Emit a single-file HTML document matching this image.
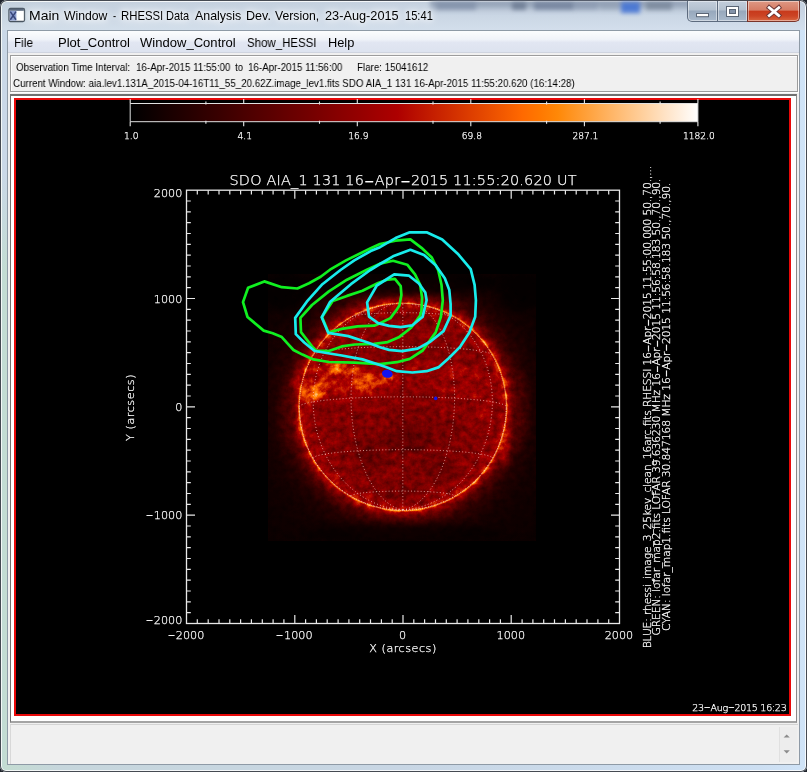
<!DOCTYPE html><html><head><meta charset="utf-8"><title>Main Window - RHESSI Data Analysis</title><style>

html,body{margin:0;padding:0;}
body{width:807px;height:772px;overflow:hidden;background:#20242c;font-family:"Liberation Sans",sans-serif;position:relative;}
body>div,body>svg{position:absolute;}
#win{left:0;top:0;width:807px;height:772px;border-radius:7px 7px 6px 6px;
 background:linear-gradient(90deg,#c1dcd6 0,#c4dcd2 6px,#c6d6dc 60px,#c8d6e4 400px,#cddff2 760px,#d0e4f8 807px);
 box-shadow:inset 0 0 0 1px #454a52, inset 0 0 0 2px rgba(255,255,255,.8);}
#tb{left:2px;top:2px;width:803px;height:28px;border-radius:5px 5px 0 0;background:linear-gradient(180deg,rgba(196,208,222,.95) 0,rgba(200,212,226,.9) 10px,rgba(212,223,236,.9) 28px);}
#tbsh{left:430px;top:1px;width:262px;height:11px;background:linear-gradient(180deg,rgba(110,125,150,.75),rgba(140,155,178,.5) 60%,rgba(180,192,210,0));filter:blur(2px);}
  .tbp{top:2px;height:8px;filter:blur(2px);}
#tbbl{left:621px;top:2px;width:19px;height:11px;background:#3f70d6;filter:blur(2.2px);opacity:.85;}
#lf{left:2px;top:30px;width:6px;height:240px;background:linear-gradient(180deg,#cad8e7 0,#cad8e7 60%,rgba(202,216,231,0) 100%);}
#client{left:8px;top:31px;width:791px;height:733px;background:#f0f0f0;box-shadow:0 0 0 1px #8e9aa6;}
#ttl,#menubar span,#info div{will-change:transform;}
#ttl span{position:absolute;top:0;transform-origin:0 50%;}
#ttl{left:0px;top:5.5px;width:440px;height:20px;font-size:12.63px;line-height:20px;color:#000;white-space:nowrap;text-shadow:0 0 5px #fff,0 0 9px #fff,0 0 12px #fff;}
.cbn{top:1px;height:21px;border:1px solid #5d6b7e;border-top:none;box-sizing:border-box;box-shadow:inset 0 0 0 1px rgba(255,255,255,.45);}
#bmin{left:687px;width:31px;border-radius:0 0 0 5px;background:linear-gradient(180deg,#c3cedb 0,#b3c0cf 45%,#97a8bc 50%,#a9b9cb 100%);}
#bmax{left:717px;width:31px;background:linear-gradient(180deg,#c3cedb 0,#b3c0cf 45%,#97a8bc 50%,#a9b9cb 100%);}
#bcls{left:747px;width:53px;border-radius:0 0 5px 0;border-color:#7a342a;background:linear-gradient(180deg,#de9884 0,#d67c64 45%,#c83a1c 52%,#cc4424 75%,#d86640 100%);}
#menubar{left:8px;top:31px;width:791px;height:21px;background:linear-gradient(180deg,#fcfdfe 0,#f0f3f9 40%,#e1e6f2 55%,#dde3ef 100%);border-bottom:1px solid #cfd4df;}
#menubar span{position:absolute;top:1.8px;font-size:12.8px;line-height:20px;color:#000;white-space:nowrap;transform-origin:0 50%;}
#info{left:10px;top:55px;width:786px;height:35px;border:1px solid #9c9c9c;background:#f0f0f0;box-shadow:inset 1px 1px 0 #fff, 1px 1px 0 #fff;}
#info div{position:absolute;font-size:11px;line-height:14px;white-space:pre;color:#000;transform:scaleX(.889);transform-origin:0 50%;}
#pp{left:10px;top:94.3px;width:784.7px;height:624.5px;background:#fff;border:1px solid #8a8a8a;border-top:2px solid #707070;border-left-color:#707070;border-bottom:2px solid #a4a4a4;}
#red{position:absolute;left:3px;top:1.6px;width:772.7px;height:614.4px;border:2.3px solid #e80808;background:#000;}
#stat{left:10px;top:724px;width:787px;height:39px;background:#f0f0f0;border-top:1px solid #d4d4d4;border-left:1px solid #d8d8d8;}
#sb{position:absolute;left:768px;top:2px;width:17px;height:35px;background:#ededed;border-left:1px solid #e0e0e0;}
.ht{font-family:"DejaVu Sans","Liberation Sans",sans-serif;font-weight:200;fill:#fff;stroke:#fff;stroke-width:0.25px;}
#plot{left:0;top:0;will-change:transform;}

</style></head><body>
<div id="win"></div><div id="tb"></div><div id="lf"></div><div id="tbsh"></div>
<div class="tbp" style="left:436px;width:40px;background:#74849f;opacity:0.55"></div>
<div class="tbp" style="left:512px;width:14px;background:#56657f;opacity:0.6"></div>
<div class="tbp" style="left:534px;width:40px;background:#62718f;opacity:0.6"></div>
<div class="tbp" style="left:574px;width:24px;background:#7f8ea8;opacity:0.45"></div>
<div class="tbp" style="left:646px;width:26px;background:#667488;opacity:0.55"></div>
<div class="tbp" style="left:600px;width:20px;background:#8a98ae;opacity:0.4"></div>
<div id="tbbl"></div>
<svg id="ico" style="left:8px;top:7px" width="18" height="16" viewBox="0 0 18 16"><rect x="1" y="1.5" width="15.5" height="13" rx="1.5" fill="#fff" stroke="#46525e" stroke-width="1.3"/><rect x="1.6" y="1.6" width="14.3" height="2.2" fill="#59677a"/><rect x="1.8" y="3.8" width="6.6" height="9.8" fill="#8d9fd0"/><path d="M2.3 4.6 L8 12.8 M8 4.6 L2.3 12.8" stroke="#39477c" stroke-width="1.5"/></svg>
<div id="ttl"><span style="left:29.3px;transform:scaleX(1.106)">Main</span> <span style="left:64.4px;transform:scaleX(0.965)">Window</span> <span style="left:113.2px;transform:scaleX(0.75)">-</span> <span style="left:121.3px;transform:scaleX(0.899)">RHESSI</span> <span style="left:166.3px;transform:scaleX(0.871)">Data</span> <span style="left:194.5px;transform:scaleX(0.983)">Analysis</span> <span style="left:245.9px;transform:scaleX(0.995)">Dev.</span> <span style="left:275.0px;transform:scaleX(0.967)">Version,</span> <span style="left:324.9px;transform:scaleX(1.009)">23-Aug-2015</span> <span style="left:404.5px;transform:scaleX(0.881)">15:41</span></div>
<div class="cbn" id="bmin"><svg width="29" height="20"><rect x="8.5" y="12.5" width="12" height="3.2" fill="#fff" stroke="#5b6676" stroke-width="1"/></svg></div>
<div class="cbn" id="bmax"><svg width="29" height="20"><rect x="8.5" y="5.5" width="12" height="10" fill="#fff" stroke="#5b6676" stroke-width="1"/><rect x="11.5" y="8.5" width="6" height="4" fill="#8393aa" stroke="#5b6676" stroke-width="1"/></svg></div>
<div class="cbn" id="bcls"><svg width="51" height="20"><path d="M21.2 6.6 L30.8 14.6 M30.8 6.6 L21.2 14.6" stroke="#6a3434" stroke-width="4.6" stroke-linecap="square"/><path d="M21.2 6.6 L30.8 14.6 M30.8 6.6 L21.2 14.6" stroke="#fff" stroke-width="2.8" stroke-linecap="square"/></svg></div>
<div id="client"></div>
<div id="menubar"><span style="left:5.5px;transform:scaleX(.92)">File</span><span style="left:49.5px;transform:scaleX(1.02)">Plot_Control</span><span style="left:132px;transform:scaleX(1.02)">Window_Control</span><span style="left:239px;transform:scaleX(.896)">Show_HESSI</span><span style="left:320px">Help</span></div>
<div id="info"><div style="left:4.5px;top:4px">Observation Time Interval: </div><div style="left:125px;top:4px">16-Apr-2015 11:55:00</div><div style="left:224px;top:4px">to</div><div style="left:236.5px;top:4px">16-Apr-2015 11:56:00</div><div style="left:346px;top:4px">Flare: 15041612</div><div style="left:1.5px;top:20px">Current Window: aia.lev1.131A_2015-04-16T11_55_20.62Z.image_lev1.fits SDO AIA_1 131 16-Apr-2015 11:55:20.620 (16:14:28)</div></div>
<div id="pp"><div id="red"></div></div>
<div id="stat"><div id="sb"><svg width="17" height="36"><path d="M3.6 10.6 L6.7 7.4 L9.8 10.6Z M3.6 23.2 L6.7 26.4 L9.8 23.2Z" fill="#8c8c8c"/></svg></div></div>
<svg id="plot" width="807" height="772" viewBox="0 0 807 772">
<defs>
<linearGradient id="cb" x1="0" x2="1" y1="0" y2="0">
<stop offset="0.0000" stop-color="rgb(0,0,0)"/>
<stop offset="0.0314" stop-color="rgb(11,0,0)"/>
<stop offset="0.0627" stop-color="rgb(23,0,0)"/>
<stop offset="0.0941" stop-color="rgb(34,0,0)"/>
<stop offset="0.1255" stop-color="rgb(46,0,0)"/>
<stop offset="0.1569" stop-color="rgb(57,0,0)"/>
<stop offset="0.1882" stop-color="rgb(69,0,0)"/>
<stop offset="0.2196" stop-color="rgb(81,0,0)"/>
<stop offset="0.2510" stop-color="rgb(92,0,0)"/>
<stop offset="0.2824" stop-color="rgb(104,0,0)"/>
<stop offset="0.3137" stop-color="rgb(115,0,0)"/>
<stop offset="0.3451" stop-color="rgb(127,0,0)"/>
<stop offset="0.3765" stop-color="rgb(139,0,0)"/>
<stop offset="0.4078" stop-color="rgb(150,0,0)"/>
<stop offset="0.4392" stop-color="rgb(162,0,0)"/>
<stop offset="0.4706" stop-color="rgb(173,0,0)"/>
<stop offset="0.5020" stop-color="rgb(185,15,0)"/>
<stop offset="0.5333" stop-color="rgb(197,30,0)"/>
<stop offset="0.5647" stop-color="rgb(208,45,0)"/>
<stop offset="0.5961" stop-color="rgb(220,60,0)"/>
<stop offset="0.6275" stop-color="rgb(231,75,0)"/>
<stop offset="0.6588" stop-color="rgb(243,90,0)"/>
<stop offset="0.6902" stop-color="rgb(255,105,0)"/>
<stop offset="0.7216" stop-color="rgb(255,120,0)"/>
<stop offset="0.7529" stop-color="rgb(255,136,7)"/>
<stop offset="0.7843" stop-color="rgb(255,151,39)"/>
<stop offset="0.8157" stop-color="rgb(255,166,70)"/>
<stop offset="0.8471" stop-color="rgb(255,181,102)"/>
<stop offset="0.8784" stop-color="rgb(255,196,133)"/>
<stop offset="0.9098" stop-color="rgb(255,211,164)"/>
<stop offset="0.9412" stop-color="rgb(255,226,196)"/>
<stop offset="0.9725" stop-color="rgb(255,241,227)"/>
<stop offset="1" stop-color="#fff"/></linearGradient>
<radialGradient id="gcor" gradientUnits="userSpaceOnUse" cx="402.8" cy="406.9" r="190">
<stop offset="0.5447" stop-color="rgb(140,140,140)"/>
<stop offset="0.5556" stop-color="rgb(118,118,118)"/>
<stop offset="0.5720" stop-color="rgb(88,88,88)"/>
<stop offset="0.5883" stop-color="rgb(64,64,64)"/>
<stop offset="0.6101" stop-color="rgb(46,46,46)"/>
<stop offset="0.6428" stop-color="rgb(30,30,30)"/>
<stop offset="0.6809" stop-color="rgb(21,21,21)"/>
<stop offset="0.7354" stop-color="rgb(14,14,14)"/>
<stop offset="0.8716" stop-color="rgb(9,9,9)"/>
<stop offset="1.0078" stop-color="rgb(7,7,7)"/>
</radialGradient>
<radialGradient id="gdisk" gradientUnits="userSpaceOnUse" cx="402.8" cy="406.9" r="103.5">
<stop offset="0.000" stop-color="rgb(82,82,82)"/>
<stop offset="0.600" stop-color="rgb(85,85,85)"/>
<stop offset="0.850" stop-color="rgb(91,91,91)"/>
<stop offset="0.950" stop-color="rgb(102,102,102)"/>
<stop offset="1.000" stop-color="rgb(126,126,126)"/>
</radialGradient>
<filter id="sunmap" filterUnits="userSpaceOnUse" x="268" y="274" width="268" height="267" color-interpolation-filters="sRGB">
<feTurbulence type="fractalNoise" baseFrequency="0.15" numOctaves="4" seed="11" result="n0"/>
<feColorMatrix in="n0" type="matrix" values="1 0 0 0 0  1 0 0 0 0  1 0 0 0 0  0 0 0 0 1" result="n"/>
<feComposite in="SourceGraphic" in2="n" operator="arithmetic" k1="0.9" k2="0.55" k3="0" k4="0" result="m"/>
<feComponentTransfer in="m"><feFuncR type="table" tableValues="0.000 0.028 0.057 0.085 0.114 0.142 0.170 0.199 0.227 0.256 0.284 0.312 0.341 0.369 0.398 0.426 0.455 0.483 0.511 0.540 0.568 0.597 0.625 0.653 0.682 0.710 0.739 0.767 0.795 0.824 0.852 0.881 0.909 0.938 0.966 0.994 1.000 1.000 1.000 1.000 1.000 1.000 1.000 1.000 1.000 1.000 1.000 1.000 1.000 1.000 1.000 1.000"/><feFuncG type="table" tableValues="0.000 0.000 0.000 0.000 0.000 0.000 0.000 0.000 0.000 0.000 0.000 0.000 0.000 0.000 0.000 0.000 0.000 0.000 0.000 0.000 0.000 0.000 0.000 0.000 0.000 0.037 0.074 0.111 0.148 0.185 0.222 0.259 0.296 0.333 0.370 0.407 0.444 0.481 0.519 0.556 0.593 0.630 0.667 0.704 0.741 0.778 0.815 0.852 0.889 0.926 0.963 1.000"/><feFuncB type="table" tableValues="0.000 0.000 0.000 0.000 0.000 0.000 0.000 0.000 0.000 0.000 0.000 0.000 0.000 0.000 0.000 0.000 0.000 0.000 0.000 0.000 0.000 0.000 0.000 0.000 0.000 0.000 0.000 0.000 0.000 0.000 0.000 0.000 0.000 0.000 0.000 0.000 0.000 0.000 0.000 0.077 0.154 0.231 0.308 0.385 0.462 0.538 0.615 0.692 0.769 0.846 0.923 1.000"/></feComponentTransfer>
</filter>
<filter id="bl3" x="-1" y="-1" width="3" height="3"><feGaussianBlur stdDeviation="3"/></filter>
<filter id="bl2" x="-1" y="-1" width="3" height="3"><feGaussianBlur stdDeviation="1.6"/></filter>
<filter id="bl1" x="-0.2" y="-0.2" width="1.4" height="1.4"><feGaussianBlur stdDeviation="0.6"/></filter>
<clipPath id="cd"><circle cx="402.8" cy="406.9" r="103.5"/></clipPath>
<clipPath id="ci"><rect x="268" y="274" width="268" height="267"/></clipPath>
</defs>
<g filter="url(#sunmap)">
<rect x="268" y="274" width="268" height="267" fill="url(#gcor)"/>
<circle cx="402.8" cy="406.9" r="103.5" fill="url(#gdisk)"/>
<g clip-path="url(#ci)">
<ellipse cx="345" cy="383" rx="54" ry="19" fill="rgb(124,124,124)" opacity="0.8" filter="url(#bl3)"/>
<ellipse cx="445" cy="378" rx="48" ry="15" fill="rgb(110,110,110)" opacity="0.65" filter="url(#bl3)"/>
<ellipse cx="400" cy="398" rx="92" ry="12" fill="rgb(96,96,96)" opacity="0.55" filter="url(#bl3)"/>
<ellipse cx="400" cy="350" rx="60" ry="25" fill="rgb(94,94,94)" opacity="0.45" filter="url(#bl3)"/>
<ellipse cx="468" cy="408" rx="30" ry="28" fill="rgb(102,102,102)" opacity="0.55" filter="url(#bl3)"/>
<ellipse cx="350" cy="420" rx="40" ry="22" fill="rgb(96,96,96)" opacity="0.4" filter="url(#bl3)"/>
<ellipse cx="337" cy="369" rx="10" ry="5" fill="rgb(190,190,190)" opacity="0.9" filter="url(#bl3)"/>
<ellipse cx="350" cy="372" rx="8" ry="4" fill="rgb(170,170,170)" opacity="0.7" filter="url(#bl3)"/>
<ellipse cx="315" cy="392" rx="11" ry="7" fill="rgb(180,180,180)" opacity="0.9" filter="url(#bl3)"/>
<ellipse cx="322" cy="386" rx="6" ry="5" fill="rgb(190,190,190)" opacity="0.8" filter="url(#bl3)"/>
<ellipse cx="308" cy="398" rx="5" ry="5" fill="rgb(175,175,175)" opacity="0.8" filter="url(#bl3)"/>
<ellipse cx="366" cy="382" rx="12" ry="8" fill="rgb(160,160,160)" opacity="0.8" filter="url(#bl3)"/>
<ellipse cx="362" cy="386" rx="6" ry="4" fill="rgb(185,185,185)" opacity="0.7" filter="url(#bl3)"/>
<ellipse cx="357" cy="377" rx="5" ry="4" fill="rgb(175,175,175)" opacity="0.7" filter="url(#bl3)"/>
<ellipse cx="372" cy="388" rx="5" ry="4" fill="rgb(170,170,170)" opacity="0.7" filter="url(#bl3)"/>
<ellipse cx="388" cy="378" rx="9" ry="4" fill="rgb(165,165,165)" opacity="0.75" filter="url(#bl3)"/>
<ellipse cx="350" cy="395" rx="8" ry="4" fill="rgb(150,150,150)" opacity="0.6" filter="url(#bl3)"/>
<ellipse cx="420" cy="368" rx="14" ry="4" fill="rgb(135,135,135)" opacity="0.5" filter="url(#bl3)"/>
<ellipse cx="455" cy="372" rx="10" ry="5" fill="rgb(140,140,140)" opacity="0.55" filter="url(#bl3)"/>
<ellipse cx="470" cy="392" rx="8" ry="6" fill="rgb(125,125,125)" opacity="0.5" filter="url(#bl3)"/>
<ellipse cx="484" cy="412" rx="6" ry="8" fill="rgb(125,125,125)" opacity="0.5" filter="url(#bl3)"/>
<ellipse cx="322" cy="446" rx="6" ry="8" fill="rgb(115,115,115)" opacity="0.4" filter="url(#bl3)"/>
<ellipse cx="300.5" cy="424" rx="2.5" ry="13" fill="rgb(185,185,185)" opacity="0.8" filter="url(#bl3)"/>
<ellipse cx="301" cy="392" rx="2.5" ry="8" fill="rgb(165,165,165)" opacity="0.6" filter="url(#bl3)"/>
<ellipse cx="506" cy="442" rx="2.5" ry="13" fill="rgb(185,185,185)" opacity="0.8" filter="url(#bl3)"/>
<ellipse cx="505" cy="460" rx="3" ry="5" fill="rgb(185,185,185)" opacity="0.6" filter="url(#bl3)"/>
<ellipse cx="506" cy="385" rx="2.5" ry="10" fill="rgb(170,170,170)" opacity="0.6" filter="url(#bl3)"/>
<ellipse cx="518" cy="410" rx="9" ry="40" fill="rgb(60,60,60)" opacity="0.5" filter="url(#bl3)"/>
<ellipse cx="288" cy="415" rx="8" ry="36" fill="rgb(52,52,52)" opacity="0.5" filter="url(#bl3)"/>
<ellipse cx="403" cy="282" rx="100" ry="13" fill="rgb(4,4,4)" opacity="0.65" filter="url(#bl3)"/>
<ellipse cx="403" cy="534" rx="100" ry="11" fill="rgb(4,4,4)" opacity="0.55" filter="url(#bl3)"/>
<ellipse cx="520" cy="292" rx="22" ry="20" fill="rgb(3,3,3)" opacity="0.6" filter="url(#bl3)"/>
<ellipse cx="286" cy="292" rx="22" ry="20" fill="rgb(3,3,3)" opacity="0.6" filter="url(#bl3)"/>
<ellipse cx="410" cy="440" rx="22" ry="14" fill="rgb(52,52,52)" opacity="0.5" filter="url(#bl3)"/>
<ellipse cx="440" cy="470" rx="16" ry="10" fill="rgb(52,52,52)" opacity="0.45" filter="url(#bl3)"/>
<ellipse cx="370" cy="455" rx="14" ry="18" fill="rgb(56,56,56)" opacity="0.4" filter="url(#bl3)"/>
<ellipse cx="400" cy="492" rx="25" ry="8" fill="rgb(56,56,56)" opacity="0.35" filter="url(#bl3)"/>
<ellipse cx="455" cy="425" rx="12" ry="8" fill="rgb(58,58,58)" opacity="0.35" filter="url(#bl3)"/>
<circle cx="402.8" cy="406.9" r="104.1" fill="none" stroke="#a8a8a8" stroke-width="1.3" filter="url(#bl1)"/>
</g>
</g>
<circle cx="402.8" cy="406.9" r="103.5" fill="none" stroke="#ffe2a0" stroke-width="0.9" stroke-dasharray="1.2 0.8" opacity="0.9"/>
<path d="M351.1 496.1 L351.1 495.8 L351.3 495.6 L351.7 495.3 L352.2 495.1 L352.8 494.8 L353.6 494.5 L354.5 494.3 L355.5 494.1 L356.7 493.8 L358 493.6 L359.4 493.4 L360.9 493.1 L362.6 492.9 L364.3 492.7 L366.2 492.5 L368.2 492.4 L370.2 492.2 L372.4 492 L374.6 491.9 L376.9 491.7 L379.3 491.6 L381.8 491.5 L384.3 491.4 L386.8 491.3 L389.4 491.2 L392 491.2 L394.7 491.1 L397.4 491.1 L400.1 491.1 L402.8 491.1 L405.5 491.1 L408.2 491.1 L410.9 491.1 L413.6 491.2 L416.2 491.2 L418.8 491.3 L421.3 491.4 L423.8 491.5 L426.3 491.6 L428.7 491.7 L431 491.9 L433.2 492 L435.4 492.2 L437.4 492.4 L439.4 492.5 L441.3 492.7 L443 492.9 L444.7 493.1 L446.2 493.4 L447.6 493.6 L448.9 493.8 L450.1 494.1 L451.1 494.3 L452 494.5 L452.8 494.8 L453.4 495.1 L453.9 495.3 L454.3 495.6 L454.5 495.8 L454.6 496.1 M313.2 458.4 L313.3 457.9 L313.7 457.5 L314.3 457 L315.1 456.6 L316.2 456.1 L317.6 455.7 L319.1 455.3 L320.9 454.8 L322.9 454.4 L325.2 454 L327.6 453.6 L330.3 453.3 L333.1 452.9 L336.2 452.6 L339.4 452.2 L342.8 451.9 L346.4 451.6 L350.1 451.3 L354 451.1 L358 450.8 L362.1 450.6 L366.3 450.4 L370.7 450.2 L375.1 450.1 L379.6 450 L384.2 449.8 L388.8 449.8 L393.4 449.7 L398.1 449.7 L402.8 449.7 L407.5 449.7 L412.2 449.7 L416.8 449.8 L421.4 449.8 L426 450 L430.5 450.1 L434.9 450.2 L439.3 450.4 L443.5 450.6 L447.6 450.8 L451.6 451.1 L455.5 451.3 L459.2 451.6 L462.8 451.9 L466.2 452.2 L469.4 452.6 L472.5 452.9 L475.3 453.3 L478 453.6 L480.4 454 L482.7 454.4 L484.7 454.8 L486.5 455.3 L488 455.7 L489.4 456.1 L490.5 456.6 L491.3 457 L491.9 457.5 L492.3 457.9 L492.4 458.4 M299.3 406.9 L299.4 406.4 L299.9 405.8 L300.6 405.3 L301.6 404.8 L302.8 404.3 L304.4 403.8 L306.2 403.3 L308.2 402.8 L310.6 402.3 L313.2 401.9 L316 401.4 L319.1 401 L322.4 400.5 L325.9 400.1 L329.6 399.8 L333.5 399.4 L337.7 399.1 L342 398.7 L346.4 398.4 L351.1 398.2 L355.8 397.9 L360.7 397.7 L365.7 397.5 L370.8 397.3 L376 397.1 L381.3 397 L386.6 396.9 L392 396.9 L397.4 396.8 L402.8 396.8 L408.2 396.8 L413.6 396.9 L419 396.9 L424.3 397 L429.6 397.1 L434.8 397.3 L439.9 397.5 L444.9 397.7 L449.8 397.9 L454.6 398.2 L459.2 398.4 L463.6 398.7 L467.9 399.1 L472.1 399.4 L476 399.8 L479.7 400.1 L483.2 400.5 L486.5 401 L489.6 401.4 L492.4 401.9 L495 402.3 L497.4 402.8 L499.4 403.3 L501.2 403.8 L502.8 404.3 L504 404.8 L505 405.3 L505.7 405.8 L506.2 406.4 L506.3 406.9 M313.7 354.5 L314.3 354 L315.1 353.6 L316.2 353.1 L317.6 352.7 L319.1 352.3 L320.9 351.8 L322.9 351.4 L325.2 351 L327.6 350.6 L330.3 350.3 L333.1 349.9 L336.2 349.5 L339.4 349.2 L342.8 348.9 L346.4 348.6 L350.1 348.3 L354 348.1 L358 347.8 L362.1 347.6 L366.3 347.4 L370.7 347.2 L375.1 347.1 L379.6 346.9 L384.2 346.8 L388.8 346.8 L393.4 346.7 L398.1 346.7 L402.8 346.7 L407.5 346.7 L412.2 346.7 L416.8 346.8 L421.4 346.8 L426 346.9 L430.5 347.1 L434.9 347.2 L439.3 347.4 L443.5 347.6 L447.6 347.8 L451.6 348.1 L455.5 348.3 L459.2 348.6 L462.8 348.9 L466.2 349.2 L469.4 349.5 L472.5 349.9 L475.3 350.3 L478 350.6 L480.4 351 L482.7 351.4 L484.7 351.8 L486.5 352.3 L488 352.7 L489.4 353.1 L490.5 353.6 L491.3 354 L491.9 354.5 M352.2 316.6 L352.8 316.4 L353.6 316.1 L354.5 315.9 L355.5 315.6 L356.7 315.4 L358 315.2 L359.4 314.9 L360.9 314.7 L362.6 314.5 L364.3 314.3 L366.2 314.1 L368.2 313.9 L370.2 313.8 L372.4 313.6 L374.6 313.5 L376.9 313.3 L379.3 313.2 L381.8 313.1 L384.3 313 L386.8 312.9 L389.4 312.8 L392 312.8 L394.7 312.7 L397.4 312.7 L400.1 312.7 L402.8 312.6 L405.5 312.7 L408.2 312.7 L410.9 312.7 L413.6 312.8 L416.2 312.8 L418.8 312.9 L421.3 313 L423.8 313.1 L426.3 313.2 L428.7 313.3 L431 313.5 L433.2 313.6 L435.4 313.8 L437.4 313.9 L439.4 314.1 L441.3 314.3 L443 314.5 L444.7 314.7 L446.2 314.9 L447.6 315.2 L448.9 315.4 L450.1 315.6 L451.1 315.9 L452 316.1 L452.8 316.4 L453.4 316.6 M402.8 509.9 L397.4 509.8 L392 509.3 L386.6 508.6 L381.3 507.7 L376 506.4 L370.8 504.9 L365.7 503.1 L360.7 501 L355.8 498.7 L351.1 496.1 L346.4 493.3 L342 490.2 L337.7 487 L333.5 483.4 L329.6 479.7 L325.9 475.8 L322.4 471.7 L319.1 467.4 L316 463 L313.2 458.4 L310.6 453.7 L308.2 448.8 L306.2 443.8 L304.4 438.7 L302.8 433.6 L301.6 428.3 L300.6 423 L299.9 417.7 L299.4 412.3 L299.3 406.9 M402.8 509.9 L398.1 509.5 L393.4 508.8 L388.8 507.8 L384.2 506.6 L379.6 505.1 L375.1 503.3 L370.7 501.3 L366.3 498.9 L362.1 496.4 L358 493.6 L354 490.5 L350.1 487.3 L346.4 483.8 L342.8 480.1 L339.4 476.2 L336.2 472.1 L333.1 467.8 L330.3 463.4 L327.6 458.8 L325.2 454 L322.9 449.2 L320.9 444.2 L319.1 439.1 L317.6 433.9 L316.2 428.7 L315.1 423.4 L314.3 418 L313.7 412.6 L313.3 407.2 L313.2 401.9 L313.3 396.5 L313.7 391.1 L314.3 385.8 L315.1 380.5 L316.2 375.4 L317.6 370.3 L319.1 365.3 L320.9 360.4 L322.9 355.6 L325.2 351 L327.6 346.6 L330.3 342.3 L333.1 338.2 L336.2 334.2 L339.4 330.5 L342.8 327 L346.4 323.7 L350.1 320.6 L354 317.8 L358 315.2 L362.1 312.8 L366.3 310.7 L370.7 308.9 L375.1 307.4 L379.6 306.1 L384.2 305.1 M402.8 509.9 L400.1 509.3 L397.4 508.4 L394.7 507.3 L392 505.8 L389.4 504.1 L386.8 502.2 L384.3 499.9 L381.8 497.4 L379.3 494.7 L376.9 491.7 L374.6 488.5 L372.4 485.1 L370.2 481.4 L368.2 477.6 L366.2 473.6 L364.3 469.3 L362.6 464.9 L360.9 460.4 L359.4 455.7 L358 450.8 L356.7 445.9 L355.5 440.8 L354.5 435.6 L353.6 430.4 L352.8 425.1 L352.2 419.8 L351.7 414.4 L351.3 409 L351.1 403.6 L351.1 398.2 L351.1 392.8 L351.3 387.4 L351.7 382.1 L352.2 376.9 L352.8 371.8 L353.6 366.8 L354.5 361.8 L355.5 357 L356.7 352.3 L358 347.8 L359.4 343.5 L360.9 339.3 L362.6 335.3 L364.3 331.5 L366.2 327.9 L368.2 324.5 L370.2 321.3 L372.4 318.4 L374.6 315.7 L376.9 313.3 L379.3 311.2 L381.8 309.2 L384.3 307.6 L386.8 306.2 L389.4 305.1 L392 304.3 L394.7 303.8 M402.8 509.9 L402.8 509.2 L402.8 508.3 L402.8 507.1 L402.8 505.6 L402.8 503.8 L402.8 501.7 L402.8 499.4 L402.8 496.9 L402.8 494.1 L402.8 491.1 L402.8 487.8 L402.8 484.3 L402.8 480.6 L402.8 476.7 L402.8 472.6 L402.8 468.3 L402.8 463.9 L402.8 459.3 L402.8 454.5 L402.8 449.7 L402.8 444.7 L402.8 439.6 L402.8 434.4 L402.8 429.1 L402.8 423.8 L402.8 418.4 L402.8 413 L402.8 407.6 L402.8 402.2 L402.8 396.8 L402.8 391.4 L402.8 386.1 L402.8 380.8 L402.8 375.6 L402.8 370.5 L402.8 365.5 L402.8 360.6 L402.8 355.8 L402.8 351.1 L402.8 346.7 L402.8 342.3 L402.8 338.2 L402.8 334.2 L402.8 330.5 L402.8 326.9 L402.8 323.6 L402.8 320.5 L402.8 317.6 L402.8 315 L402.8 312.6 L402.8 310.5 L402.8 308.7 L402.8 307.1 L402.8 305.8 L402.8 304.8 L402.8 304 L402.8 303.6 L402.8 303.4 M402.8 509.9 L405.5 509.3 L408.2 508.4 L410.9 507.3 L413.6 505.8 L416.2 504.1 L418.8 502.2 L421.3 499.9 L423.8 497.4 L426.3 494.7 L428.7 491.7 L431 488.5 L433.2 485.1 L435.4 481.4 L437.4 477.6 L439.4 473.6 L441.3 469.3 L443 464.9 L444.7 460.4 L446.2 455.7 L447.6 450.8 L448.9 445.9 L450.1 440.8 L451.1 435.6 L452 430.4 L452.8 425.1 L453.4 419.8 L453.9 414.4 L454.3 409 L454.5 403.6 L454.6 398.2 L454.5 392.8 L454.3 387.4 L453.9 382.1 L453.4 376.9 L452.8 371.8 L452 366.8 L451.1 361.8 L450.1 357 L448.9 352.3 L447.6 347.8 L446.2 343.5 L444.7 339.3 L443 335.3 L441.3 331.5 L439.4 327.9 L437.4 324.5 L435.4 321.3 L433.2 318.4 L431 315.7 L428.7 313.3 L426.3 311.2 L423.8 309.2 L421.3 307.6 L418.8 306.2 L416.2 305.1 L413.6 304.3 L410.9 303.8 M402.8 509.9 L407.5 509.5 L412.2 508.8 L416.8 507.8 L421.4 506.6 L426 505.1 L430.5 503.3 L434.9 501.3 L439.3 498.9 L443.5 496.4 L447.6 493.6 L451.6 490.5 L455.5 487.3 L459.2 483.8 L462.8 480.1 L466.2 476.2 L469.4 472.1 L472.5 467.8 L475.3 463.4 L478 458.8 L480.4 454 L482.7 449.2 L484.7 444.2 L486.5 439.1 L488 433.9 L489.4 428.7 L490.5 423.4 L491.3 418 L491.9 412.6 L492.3 407.2 L492.4 401.9 L492.3 396.5 L491.9 391.1 L491.3 385.8 L490.5 380.5 L489.4 375.4 L488 370.3 L486.5 365.3 L484.7 360.4 L482.7 355.6 L480.4 351 L478 346.6 L475.3 342.3 L472.5 338.2 L469.4 334.2 L466.2 330.5 L462.8 327 L459.2 323.7 L455.5 320.6 L451.6 317.8 L447.6 315.2 L443.5 312.8 L439.3 310.7 L434.9 308.9 L430.5 307.4 L426 306.1 L421.4 305.1 M402.8 509.9 L408.2 509.8 L413.6 509.3 L419 508.6 L424.3 507.7 L429.6 506.4 L434.8 504.9 L439.9 503.1 L444.9 501 L449.8 498.7 L454.6 496.1 L459.2 493.3 L463.6 490.2 L467.9 487 L472.1 483.4 L476 479.7 L479.7 475.8 L483.2 471.7 L486.5 467.4 L489.6 463 L492.4 458.4 L495 453.7 L497.4 448.8 L499.4 443.8 L501.2 438.7 L502.8 433.6 L504 428.3 L505 423 L505.7 417.7 L506.2 412.3 L506.3 406.9" fill="none" stroke="#ffd0c8" stroke-width="1" stroke-dasharray="1 2.2" opacity="0.7"/>
<path d="M243 302.1 L248.1 287.8 L264.3 281.4 L281.8 287.2 L297.4 288.5 L309 283.3 L320.7 276.8 L330 269.7 L346 260.4 L370.7 248.2 L380 244 L395.5 240.7 L410.4 239.4 L421.5 247.8 L431.8 257.6 L438.3 270.5 L441.5 284.8 L442.8 300.3 L440.9 316.8 L435.7 332.4 L422.7 350.5 L409.8 358.9 L396.8 362.2 L380 364.1 L354.8 362.6 L328.9 362 L313.3 359.4 L302.5 354.6 L293.5 350 L287 342.9 L281.8 337.1 L272.7 333.2 L263.7 330.6 L247.5 317Z" fill="none" stroke="#10f020" stroke-width="2.7" stroke-linejoin="round"/>
<path d="M300.4 317.9 L312 305 L328.9 291.4 L347 279.7 L366.4 270 L380 263.6 L393 260.8 L407.2 264.7 L415 274.4 L420.2 284.8 L422.1 297.7 L421.5 310.7 L420.2 315.5 L411.1 327.8 L399.4 336.9 L387.8 342.1 L374.2 343.8 L354.8 344.5 L341.8 346.4 L328.9 351 L316 350.5 L312 346.4 L301 332.2Z" fill="none" stroke="#10f020" stroke-width="2.7" stroke-linejoin="round"/>
<path d="M322 317 L332.7 301.1 L347 295.9 L362.5 290.7 L378.1 283 L387.8 279.6 L394.9 278.9 L400.7 286.1 L401.4 295.1 L399.4 305.5 L396.2 310.4 L390.4 318.1 L380 323.3 L374.2 325.7 L357.4 326.3 L341.8 328.9 L328.5 332.5Z" fill="none" stroke="#10f020" stroke-width="2.7" stroke-linejoin="round"/>
<ellipse cx="387.3" cy="373.8" rx="5.4" ry="4" fill="#1212f0" transform="rotate(10 387.3 373.8)"/>
<circle cx="435.7" cy="398.4" r="1.8" fill="#1414e8"/>
<path d="M295.2 317.9 L306.8 301.7 L322.4 284.2 L340.5 270 L354.3 260.4 L370.7 251.1 L380 247.2 L395.5 238.1 L409.8 232.3 L426.6 232.3 L442.2 239.4 L457.7 253.7 L470.7 269.2 L474.6 284.8 L475.9 300.3 L475.2 316.8 L469.4 332.4 L460.3 346.6 L448.7 358.3 L438.3 367.4 L426.6 371.2 L412.4 372.5 L396.8 371.2 L385.2 366.7 L362.5 359.4 L341.8 355.5 L314.6 351 L304.2 342.5 L295.8 334.1Z" fill="none" stroke="#18ecec" stroke-width="2.7" stroke-linejoin="round"/>
<path d="M321.7 317.3 L330.2 301.7 L350.9 284.2 L370.3 270 L380 264 L393 256.3 L410.4 249.8 L424 255 L435.7 265.3 L444.8 278.3 L449.3 290 L450.6 304.2 L450.6 315.5 L443.5 331.1 L430.5 341.5 L417.6 348.6 L402 351.2 L389.1 349.9 L380 347.3 L367.7 342.5 L348.3 336.1 L328.2 332.8Z" fill="none" stroke="#18ecec" stroke-width="2.7" stroke-linejoin="round"/>
<path d="M367.1 302.4 L376.8 285.5 L394.2 274.4 L409.1 275.7 L418.9 283.5 L425.3 292.5 L426.6 300.3 L422.7 316.8 L412.4 325.3 L400.7 327.2 L389.1 325.9 L378.1 323.1 L369 316.6Z" fill="none" stroke="#18ecec" stroke-width="2.7" stroke-linejoin="round"/>
<rect x="186.5" y="190.2" width="433" height="433.3" fill="none" stroke="#e8e8e8" stroke-width="1.3"/>
<path d="M197.3 623.5v-4.3M197.3 190.2v4.3M186.5 612.7h4.3M619.5 612.7h-4.3M208.2 623.5v-4.3M208.2 190.2v4.3M186.5 601.8h4.3M619.5 601.8h-4.3M219 623.5v-4.3M219 190.2v4.3M186.5 591h4.3M619.5 591h-4.3M229.8 623.5v-4.3M229.8 190.2v4.3M186.5 580.2h4.3M619.5 580.2h-4.3M240.6 623.5v-4.3M240.6 190.2v4.3M186.5 569.3h4.3M619.5 569.3h-4.3M251.4 623.5v-4.3M251.4 190.2v4.3M186.5 558.5h4.3M619.5 558.5h-4.3M262.3 623.5v-4.3M262.3 190.2v4.3M186.5 547.7h4.3M619.5 547.7h-4.3M273.1 623.5v-4.3M273.1 190.2v4.3M186.5 536.8h4.3M619.5 536.8h-4.3M283.9 623.5v-4.3M283.9 190.2v4.3M186.5 526h4.3M619.5 526h-4.3M294.8 623.5v-8.5M294.8 190.2v8.5M186.5 515.2h8.5M619.5 515.2h-8.5M305.6 623.5v-4.3M305.6 190.2v4.3M186.5 504.3h4.3M619.5 504.3h-4.3M316.4 623.5v-4.3M316.4 190.2v4.3M186.5 493.5h4.3M619.5 493.5h-4.3M327.2 623.5v-4.3M327.2 190.2v4.3M186.5 482.7h4.3M619.5 482.7h-4.3M338.1 623.5v-4.3M338.1 190.2v4.3M186.5 471.8h4.3M619.5 471.8h-4.3M348.9 623.5v-4.3M348.9 190.2v4.3M186.5 461h4.3M619.5 461h-4.3M359.7 623.5v-4.3M359.7 190.2v4.3M186.5 450.2h4.3M619.5 450.2h-4.3M370.5 623.5v-4.3M370.5 190.2v4.3M186.5 439.3h4.3M619.5 439.3h-4.3M381.4 623.5v-4.3M381.4 190.2v4.3M186.5 428.5h4.3M619.5 428.5h-4.3M392.2 623.5v-4.3M392.2 190.2v4.3M186.5 417.7h4.3M619.5 417.7h-4.3M403 623.5v-8.5M403 190.2v8.5M186.5 406.9h8.5M619.5 406.9h-8.5M413.8 623.5v-4.3M413.8 190.2v4.3M186.5 396h4.3M619.5 396h-4.3M424.6 623.5v-4.3M424.6 190.2v4.3M186.5 385.2h4.3M619.5 385.2h-4.3M435.5 623.5v-4.3M435.5 190.2v4.3M186.5 374.4h4.3M619.5 374.4h-4.3M446.3 623.5v-4.3M446.3 190.2v4.3M186.5 363.5h4.3M619.5 363.5h-4.3M457.1 623.5v-4.3M457.1 190.2v4.3M186.5 352.7h4.3M619.5 352.7h-4.3M467.9 623.5v-4.3M467.9 190.2v4.3M186.5 341.9h4.3M619.5 341.9h-4.3M478.8 623.5v-4.3M478.8 190.2v4.3M186.5 331h4.3M619.5 331h-4.3M489.6 623.5v-4.3M489.6 190.2v4.3M186.5 320.2h4.3M619.5 320.2h-4.3M500.4 623.5v-4.3M500.4 190.2v4.3M186.5 309.4h4.3M619.5 309.4h-4.3M511.2 623.5v-8.5M511.2 190.2v8.5M186.5 298.5h8.5M619.5 298.5h-8.5M522.1 623.5v-4.3M522.1 190.2v4.3M186.5 287.7h4.3M619.5 287.7h-4.3M532.9 623.5v-4.3M532.9 190.2v4.3M186.5 276.9h4.3M619.5 276.9h-4.3M543.7 623.5v-4.3M543.7 190.2v4.3M186.5 266h4.3M619.5 266h-4.3M554.5 623.5v-4.3M554.5 190.2v4.3M186.5 255.2h4.3M619.5 255.2h-4.3M565.4 623.5v-4.3M565.4 190.2v4.3M186.5 244.4h4.3M619.5 244.4h-4.3M576.2 623.5v-4.3M576.2 190.2v4.3M186.5 233.5h4.3M619.5 233.5h-4.3M587 623.5v-4.3M587 190.2v4.3M186.5 222.7h4.3M619.5 222.7h-4.3M597.9 623.5v-4.3M597.9 190.2v4.3M186.5 211.9h4.3M619.5 211.9h-4.3M608.7 623.5v-4.3M608.7 190.2v4.3M186.5 201h4.3M619.5 201h-4.3" stroke="#e8e8e8" stroke-width="1.2" fill="none"/>
<rect x="130.2" y="103.5" width="567.7" height="18.2" fill="url(#cb)"/>
<path d="M130.2 103.5H697.9M130.2 121.7H697.9M130.2 103.5V121.7M697.9 103.5V121.7" stroke="#e0e0e0" stroke-width="1" fill="none"/>
<path d="M130.2 99V103.5M130.2 121.7V126.2M205.9 101.5v3M205.9 123.7v-3M243.7 99V103.5M243.7 121.7V126.2M319.5 101.5v3M319.5 123.7v-3M357.3 99V103.5M357.3 121.7V126.2M433 101.5v3M433 123.7v-3M470.8 99V103.5M470.8 121.7V126.2M546.6 101.5v3M546.6 123.7v-3M584.4 99V103.5M584.4 121.7V126.2M660.1 101.5v3M660.1 123.7v-3M697.9 99V103.5M697.9 121.7V126.2" stroke="#e8e8e8" stroke-width="1.1" fill="none"/>
<g class="ht" font-size="9.1" text-anchor="middle">
<text x="131.2" y="138.8">1.0</text>
<text x="244.7" y="138.8">4.1</text>
<text x="358.3" y="138.8">16.9</text>
<text x="471.8" y="138.8">69.8</text>
<text x="585.4" y="138.8">287.1</text>
<text x="698.9" y="138.8">1182.0</text>
</g>
<text class="ht" x="403" y="185.3" font-size="14.4" text-anchor="middle" textLength="347" lengthAdjust="spacing">SDO AIA_1 131 16<tspan font-size="29" dy="3.3">-</tspan><tspan dy="-3.3">Apr</tspan><tspan font-size="29" dy="3.3">-</tspan><tspan dy="-3.3">2015 11:55:20.620 UT</tspan></text>
<g class="ht" font-size="11.2" text-anchor="end">
<text x="182.3" y="624.2"><tspan font-size="21" dy="1.9">-</tspan><tspan dy="-1.9" dx="0.6">2000</tspan></text>
<text x="182.3" y="519.2"><tspan font-size="21" dy="1.9">-</tspan><tspan dy="-1.9" dx="0.6">1000</tspan></text>
<text x="182.3" y="410.9">0</text>
<text x="182.3" y="302.5">1000</text>
<text x="182.3" y="197.2">2000</text>
</g>
<g class="ht" font-size="11.2" text-anchor="middle">
<text x="186" y="639"><tspan font-size="21" dy="1.9">-</tspan><tspan dy="-1.9" dx="0.6">2000</tspan></text>
<text x="294.2" y="639"><tspan font-size="21" dy="1.9">-</tspan><tspan dy="-1.9" dx="0.6">1000</tspan></text>
<text x="402.5" y="639">0</text>
<text x="510.8" y="639">1000</text>
<text x="619" y="639">2000</text>
<text x="402.8" y="652" textLength="67" lengthAdjust="spacing">X (arcsecs)</text>
<text transform="translate(134 407.7) rotate(-90)" textLength="66.5" lengthAdjust="spacing">Y (arcsecs)</text>
</g>
<g class="ht" font-size="10.7" text-anchor="middle">
<text transform="translate(651.4 407) rotate(-90)" textLength="482.5" lengthAdjust="spacing">BLUE: rhessi_image_3_25kev_clean_16arc.fits RHESSI 16<tspan font-size="21" dy="2.4">-</tspan><tspan dy="-2.4">Apr</tspan><tspan font-size="21" dy="2.4">-</tspan><tspan dy="-2.4">2015 11:55:00.000 50.,70.,...</tspan></text>
<text transform="translate(660.4 407) rotate(-90)" textLength="457" lengthAdjust="spacing">GREEN: lofar_map2.fits LOFAR 39.636230 MHz 16<tspan font-size="21" dy="2.4">-</tspan><tspan dy="-2.4">Apr</tspan><tspan font-size="21" dy="2.4">-</tspan><tspan dy="-2.4">2015 11:56:58.183 50.,70.,90.</tspan></text>
<text transform="translate(670 406.8) rotate(-90)" textLength="448.5" lengthAdjust="spacing">CYAN: lofar_map1.fits LOFAR 30.847168 MHz 16<tspan font-size="21" dy="2.4">-</tspan><tspan dy="-2.4">Apr</tspan><tspan font-size="21" dy="2.4">-</tspan><tspan dy="-2.4">2015 11:56:58.183 50.,70.,90.</tspan></text>
</g>
<text class="ht" x="786.7" y="711.3" font-size="9.5" text-anchor="end" textLength="94.4" lengthAdjust="spacing">23<tspan font-size="19" dy="2.1">-</tspan><tspan dy="-2.1">Aug</tspan><tspan font-size="19" dy="2.1">-</tspan><tspan dy="-2.1">2015 16:23</tspan></text>
</svg>
</body></html>
